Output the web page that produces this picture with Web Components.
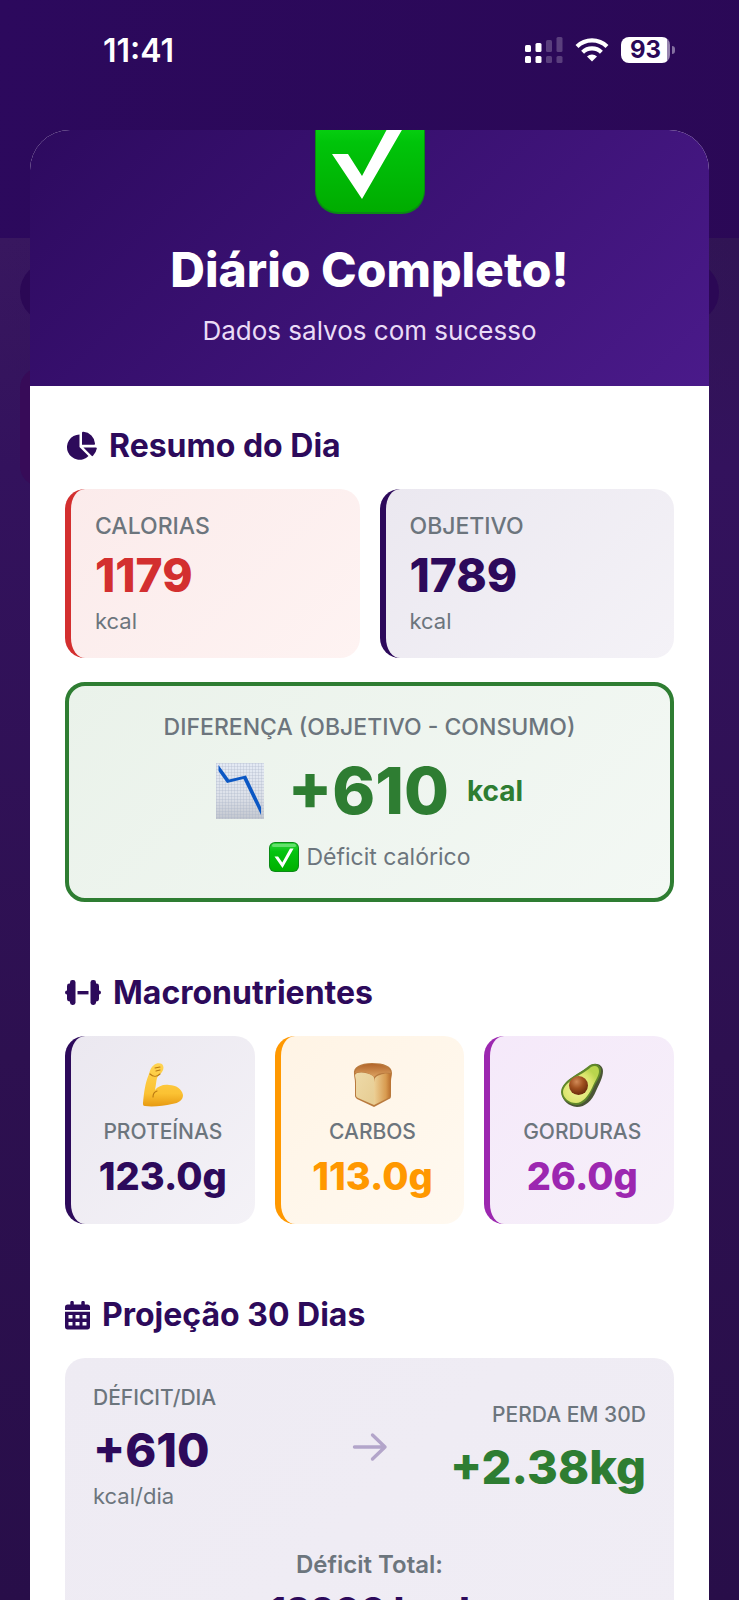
<!DOCTYPE html>
<html lang="pt-BR">
<head>
<meta charset="utf-8">
<meta name="viewport" content="width=device-width, initial-scale=1">
<title>Diário Completo</title>
<style>
    :root {
        --primary: #2d0a5b;
        --muted: #6c757d;
        --green: #2e7d32;
    }
    body {
        margin: 0;
        font-family: Inter, "Liberation Sans", sans-serif;
        color: var(--primary);
    }
</style>
</head>
<body>
<diary-app>
    <status-bar slot="status" time="11:41" battery="93"></status-bar>
    <summary-sheet>
        <success-header slot="header">
            Diário Completo!
            <span slot="subtitle">Dados salvos com sucesso</span>
        </success-header>

        <summary-section icon="pie" heading="Resumo do Dia">
            <card-row>
                <stat-card tone="red" label="CALORIAS" value="1179" unit="kcal"></stat-card>
                <stat-card tone="primary" label="OBJETIVO" value="1789" unit="kcal"></stat-card>
            </card-row>
            <difference-card label="DIFERENÇA (OBJETIVO - CONSUMO)" value="+610" unit="kcal">Déficit calórico</difference-card>
        </summary-section>

        <summary-section icon="dumbbell" heading="Macronutrientes">
            <card-row>
                <macro-card tone="primary" icon="arm" label="PROTEÍNAS" value="123.0g"></macro-card>
                <macro-card tone="orange" icon="bread" label="CARBOS" value="113.0g"></macro-card>
                <macro-card tone="purple" icon="avocado" label="GORDURAS" value="26.0g"></macro-card>
            </card-row>
        </summary-section>

        <summary-section icon="calendar" heading="Projeção 30 Dias">
            <projection-card></projection-card>
        </summary-section>
    </summary-sheet>
</diary-app>

<script>
const ICONS = {
    pie: `<svg width="32" height="30" viewBox="0 0 32 30" fill="#2d0a5b">
        <path d="M14.500 3.500V16l9 9A12.600 12.600 0 1 1 14.500 3.500z"/>
        <path d="M17 2a1.200 1.200 0 0 1 1.400-1.200A12.600 12.600 0 0 1 30 12.600a1 1 0 0 1-1 1.200H17z"/>
        <path d="M18.400 16.400h12.400a1 1 0 0 1 1 1.200 13 13 0 0 1-3.800 7.200 1 1 0 0 1-1.400 0z"/></svg>`,
    dumbbell: `<svg width="36" height="26" viewBox="0 0 36 26" fill="#2d0a5b">
        <rect x="5" y="0" width="5.500" height="25" rx="2.400"/><rect x="2" y="3.500" width="6" height="18" rx="2.400"/><rect x="0" y="10.500" width="6" height="4" rx="2"/>
        <rect x="25.500" y="0" width="5.500" height="25" rx="2.400"/><rect x="28" y="3.500" width="6" height="18" rx="2.400"/><rect x="30" y="10.500" width="6" height="4" rx="2"/>
        <rect x="12.500" y="11" width="11" height="3.400"/></svg>`,
    calendar: `<svg width="25" height="29" viewBox="0 0 25 29" fill="#2d0a5b">
        <path d="M5.300 1.600a1.700 1.700 0 0 1 3.500 0v2h7.500v-2a1.700 1.700 0 0 1 3.500 0v2h2.500A2.700 2.700 0 0 1 25 6.300V9H0V6.300a2.700 2.700 0 0 1 2.700-2.700h2.600z"/>
        <path fill-rule="evenodd" d="M0 10.800h25v15A2.700 2.700 0 0 1 22.300 28.500H2.700A2.700 2.700 0 0 1 0 25.800zM3.500 14v3.500h4V14zm7 0v3.500h4V14zm7 0v3.500h4V14zM3.500 21v3.500h4V21zm7 0v3.500h4V21zm7 0v3.500h4V21z"/></svg>`,
    arrow: `<svg width="36" height="30" viewBox="0 0 36 30" fill="none" stroke="#b3a5ca" stroke-width="3.400" stroke-linecap="round" stroke-linejoin="round">
        <path d="M2.500 15H33M20.500 3l12.500 12-12.500 12"/></svg>`,
    badge: `<svg width="110" height="110" viewBox="0 0 110 110">
        <defs><linearGradient id="g" x1="0" y1="0" x2="0" y2="1"><stop offset="0" stop-color="#12e01c"/><stop offset=".35" stop-color="#00c40a"/><stop offset="1" stop-color="#00ac00"/></linearGradient></defs>
        <rect width="110" height="110" rx="23" fill="#0a8a14"/><rect x="1" y="1" width="108" height="107" rx="22" fill="url(#g)"/>
        <path d="M17 50h16l14 22L79 12h16L47 95z" fill="#fff"/></svg>`,
    check: `<svg width="30" height="30" viewBox="0 0 30 30">
        <defs><linearGradient id="c" x1="0" y1="0" x2="0" y2="1"><stop offset="0" stop-color="#2fd43c"/><stop offset=".3" stop-color="#05c410"/><stop offset="1" stop-color="#00b000"/></linearGradient></defs>
        <rect width="30" height="30" rx="6" fill="#0b8a16"/><rect x="1" y="1" width="28" height="28" rx="5" fill="url(#c)"/>
        <rect x="3" y="2" width="24" height="3" rx="1.500" fill="#7fe886" opacity=".7"/>
        <path d="M5.500 14.500h3.600l4.200 6L21 6.500h3.600L13.500 26z" fill="#fff"/></svg>`,
    chart: `<svg width="48" height="56" viewBox="0 0 48 56">
        <defs><linearGradient id="p" x1="0" y1="0" x2="0" y2="1"><stop offset="0" stop-color="#e4eaf4"/><stop offset=".6" stop-color="#dde1e9"/><stop offset="1" stop-color="#c3c7cf"/></linearGradient>
        <pattern id="n" width="3" height="3" patternUnits="userSpaceOnUse"><path d="M0 .5h3M.5 0v3" stroke="#a5b1c4" stroke-width=".3"/></pattern></defs>
        <rect width="48" height="56" fill="url(#p)"/><rect width="48" height="56" fill="url(#n)"/>
        <path d="M2.500 2v6L11 20l16.500-4L45 52v-8L30 12.500 13 16.500z" fill="#0b57c4"/></svg>`,
    arm: `<svg width="44" height="44" viewBox="0 0 44 44">
        <defs><linearGradient id="a" x1="0" y1="0" x2="0" y2="1"><stop offset="0" stop-color="#ffd452"/><stop offset=".7" stop-color="#fbc233"/><stop offset="1" stop-color="#e79a12"/></linearGradient></defs>
        <path d="M13 2c2-2 6-2 8-1 2 2 2 5 0 8-1 2-4 3-5 6-1 4-1 7-2 12 3-4 9-6 14-5 7 0 13 4 14 10 0 5-4 8-11 9-8 2-20 3-27 2-2 0-2-1-2-3C3 30 4 20 8 11c1-4 2-7 5-9z" fill="url(#a)"/>
        <path d="M9 11c3 3 7 3 10 0M14 5l5-1M15 8l4-1M16 28c-3 1-4 3-4 6" fill="none" stroke="#b97812" stroke-width="1.100" stroke-linecap="round"/></svg>`,
    bread: `<svg width="40" height="44" viewBox="0 0 40 44">
        <defs><linearGradient id="f" x1="0" y1="0" x2="1" y2="1"><stop offset="0" stop-color="#eedaa8"/><stop offset="1" stop-color="#e6cc92"/></linearGradient>
        <linearGradient id="s" x1="0" y1="0" x2="1" y2="0"><stop offset="0" stop-color="#ecd096"/><stop offset=".7" stop-color="#d89b50"/><stop offset="1" stop-color="#b96d2b"/></linearGradient>
        <linearGradient id="t" x1="0" y1="0" x2="0" y2="1"><stop offset="0" stop-color="#b3662b"/><stop offset="1" stop-color="#dca261"/></linearGradient></defs>
        <path d="M1 11C0 4 7 0 19 0s20 3 20 10c0 3-1 5-1 8v15c0 2-1 3-2 3l-15 8L4 36c-1-1-2-2-2-3V20c0-4-1-6-1-9z" fill="#b97a3e"/>
        <path d="M2 12c1-4 13-3 18 1 2 2 1 5 1 8v21L5 35c-1-1-2-1-2-3V19c0-3-1-5-1-7z" fill="url(#f)"/>
        <path d="M21 42V21c0-5 1-8 6-9 5-2 9-2 11 0l-1 20c0 2 0 2-2 3z" fill="url(#s)"/>
        <path d="M2 10C4 3 11 1 19 1s17 2 19 9c-8-1-14 0-17 4C16 9 8 8 2 10z" fill="url(#t)"/></svg>`,
    avocado: `<svg width="44" height="44" viewBox="0 0 44 44">
        <defs><radialGradient id="v" cx=".4" cy=".6" r=".6"><stop offset="0" stop-color="#f4f3a0"/><stop offset=".7" stop-color="#dbe56c"/><stop offset="1" stop-color="#b9d54d"/></radialGradient>
        <radialGradient id="b" cx=".4" cy=".3" r=".7"><stop offset="0" stop-color="#d28b58"/><stop offset=".5" stop-color="#a0501f"/><stop offset="1" stop-color="#6b2c0c"/></radialGradient></defs>
        <path d="M31 2c5-3 12 0 12 6 0 7-4 13-7 20-4 10-11 16-19 16-9-1-16-7-15-16C3 17 18 12 31 2z" fill="#4a5536"/>
        <path d="M30 2c4-2 11-1 11 5 0 7-5 12-8 19-4 9-9 16-17 16C8 41 1 36 1 29 2 17 18 12 30 2z" fill="#60882b"/>
        <path d="M31 4c4-2 8-1 8 4 0 5-4 10-7 17-4 8-9 15-16 15S3 35 3 29C4 18 21 13 31 4z" fill="url(#v)"/>
        <circle cx="18.500" cy="22.500" r="9.500" fill="url(#b)"/></svg>`,
    signal: `<svg width="38" height="26" viewBox="0 0 38 26" fill="#fff">
        <rect y="8" width="6" height="7" rx="1.500"/><rect y="19" width="6" height="7" rx="1.500"/>
        <rect x="10.500" y="6" width="6" height="9" rx="1.500"/><rect x="10.500" y="19" width="6" height="7" rx="1.500"/>
        <g opacity=".22"><rect x="21" y="3" width="6" height="12" rx="1.500"/><rect x="21" y="19" width="6" height="7" rx="1.500"/>
        <rect x="31.500" y="0" width="6" height="15" rx="1.500"/><rect x="31.500" y="19" width="6" height="7" rx="1.500"/></g></svg>`,
    wifi: `<svg width="34" height="24" viewBox="0 0 34 24" fill="none" stroke="#fff" stroke-width="4.200">
        <path d="M2 8.500a21.500 21.500 0 0 1 30 0"/><path d="M7.600 14.200a13.500 13.500 0 0 1 18.800 0"/>
        <path d="M17 23.500l-5-5a7.200 7.200 0 0 1 10 0z" fill="#fff" stroke="none"/></svg>`
};

// card colours per tone: text/border, gradient start, gradient end
const TONES = {
    red: ['#d32f2f', '#fbebeb', '#fef3f2'],
    primary: ['#2d0a5b', '#ebe8f0', '#f4f2f7'],
    orange: ['#ff9800', '#fff4e5', '#fff9f0'],
    purple: ['#9c27b0', '#f5e9fa', '#f6f0f9']
};

class BaseElement extends HTMLElement {
    constructor() {
        super();
        this.attachShadow({ mode: 'open' });
    }

    connectedCallback() {
        this.shadowRoot.innerHTML = this.render();
    }

    attr(name) {
        return this.getAttribute(name) || '';
    }
}

class DiaryApp extends BaseElement {
    render() {
        return `
            <style>
                :host {
                    display: flex;
                    flex-direction: column;
                    position: relative;
                    box-sizing: border-box;
                    height: 100vh;
                    overflow: hidden;
                    background: linear-gradient(100deg, #2c095d, #2a0854);
                }
                /* dimmed page under the sheet */
                .page {
                    position: absolute;
                    inset: 238px 0 0;
                    background: linear-gradient(180deg, rgba(44, 14, 92, 0) 0, #33125d 230px, #2d1050 60%, #280e49), linear-gradient(90deg, #38175f, #301454);
                }
                .pill {
                    position: absolute;
                    top: 24px;
                    left: 20px;
                    right: 20px;
                    height: 60px;
                    border-radius: 30px;
                    background: #2b0855;
                }
                .panel {
                    position: absolute;
                    top: 130px;
                    left: 20px;
                    right: 30px;
                    height: 118px;
                    border-radius: 20px;
                    background: #370b58;
                }
                main {
                    position: relative;
                    flex: 1;
                    min-height: 0;
                    margin: 0 30px;
                }
            </style>
            <div class="page"><div class="pill"></div><div class="panel"></div></div>
            <slot name="status"></slot>
            <main><slot></slot></main>
        `;
    }
}

class StatusBar extends BaseElement {
    render() {
        return `
            <style>
                :host {
                    position: relative;
                    display: flex;
                    justify-content: space-between;
                    align-items: center;
                    box-sizing: border-box;
                    height: 130px;
                    padding: 0 64px 30px 103px;
                    color: #fff;
                }
                .time { font-size: 32px; font-weight: 600; }
                .icons { display: flex; align-items: center; gap: 12px; }
                .icons svg { display: block; }
                .battery { display: flex; align-items: center; gap: 2px; }
                .level {
                    width: 49px;
                    border-radius: 8px;
                    background: linear-gradient(90deg, #fff 46px, #9684ae 46px);
                    color: #2a0858;
                    font-size: 24px;
                    font-weight: 700;
                    line-height: 26px;
                    text-align: center;
                }
                .tip { width: 3px; height: 8px; border-radius: 0 3px 3px 0; background: #8470a0; }
            </style>
            <span class="time">${this.attr('time')}</span>
            <div class="icons">
                ${ICONS.signal}
                ${ICONS.wifi}
                <div class="battery"><span class="level">${this.attr('battery')}</span><span class="tip"></span></div>
            </div>
        `;
    }
}

class SummarySheet extends BaseElement {
    render() {
        return `
            <style>
                :host {
                    display: block;
                    height: 100%;
                    overflow: hidden;
                    border-radius: 40px 40px 0 0;
                    background: #fff;
                }
                .body {
                    display: flex;
                    flex-direction: column;
                    gap: 67px;
                    padding: 36px 35px;
                }
            </style>
            <slot name="header"></slot>
            <div class="body"><slot></slot></div>
        `;
    }
}

class SuccessHeader extends BaseElement {
    render() {
        return `
            <style>
                :host {
                    display: flex;
                    flex-direction: column;
                    align-items: center;
                    padding-bottom: 36px;
                    background: linear-gradient(135deg, #2d0a5f, #4a1a8a);
                    color: #fff;
                    text-align: center;
                }
                .badge {
                    display: flex;
                    align-items: flex-end;
                    height: 84px;
                    overflow: hidden;
                }
                .badge svg { flex: none; }
                h1 { margin: 26px 0 12px; font-size: 48px; font-weight: 800; line-height: 60px; }
                p { margin: 0; color: #eadcf6; font-size: 26px; line-height: 38px; }
            </style>
            <div class="badge">${ICONS.badge}</div>
            <h1><slot></slot></h1>
            <p><slot name="subtitle"></slot></p>
        `;
    }
}

class SummarySection extends BaseElement {
    render() {
        return `
            <style>
                :host { display: block; }
                h2 {
                    display: flex;
                    align-items: center;
                    gap: 12px;
                    margin: 0 0 19px;
                    font-size: 32px;
                    font-weight: 700;
                    line-height: 48px;
                }
                .content { display: flex; flex-direction: column; gap: 24px; }
            </style>
            <h2>${ICONS[this.attr('icon')]}${this.attr('heading')}</h2>
            <div class="content"><slot></slot></div>
        `;
    }
}

class CardRow extends BaseElement {
    render() {
        return `
            <style>
                :host { display: flex; gap: 20px; }
                ::slotted(*) { flex: 1 1 0; min-width: 0; }
            </style>
            <slot></slot>
        `;
    }
}

class StatCard extends BaseElement {
    render() {
        const [color, from, to] = TONES[this.attr('tone')];
        return `
            <style>
                :host {
                    display: block;
                    box-sizing: border-box;
                    padding: 22px 24px 23px;
                    border-left: 6px solid ${color};
                    border-radius: 20px;
                    background: linear-gradient(135deg, ${from}, ${to});
                }
                div { color: var(--muted); font-size: 22px; }
                .label { font-size: 23px; font-weight: 500; line-height: 30px; }
                .value { margin: 8px 0 6px; color: ${color}; font-size: 46px; font-weight: 800; line-height: 52px; }
                .unit { line-height: 28px; }
            </style>
            <div class="label">${this.attr('label')}</div>
            <div class="value">${this.attr('value')}</div>
            <div class="unit">${this.attr('unit')}</div>
        `;
    }
}

class DifferenceCard extends BaseElement {
    render() {
        return `
            <style>
                :host {
                    display: flex;
                    flex-direction: column;
                    align-items: center;
                    gap: 10px;
                    padding: 26px 24px 24px;
                    border: 4px solid var(--green);
                    border-radius: 20px;
                    background: linear-gradient(135deg, #eaf2ea, #f3f8f4);
                    color: var(--muted);
                }
                .label { font-size: 23px; font-weight: 500; line-height: 30px; }
                .amount { display: flex; align-items: center; color: var(--green); line-height: 78px; }
                .value { margin: 0 18px 0 24px; font-size: 65px; font-weight: 800; }
                .unit { font-size: 28px; font-weight: 700; }
                .status { display: flex; align-items: center; gap: 8px; font-size: 23px; line-height: 34px; }
            </style>
            <div class="label">${this.attr('label')}</div>
            <div class="amount">
                ${ICONS.chart}
                <span class="value">${this.attr('value')}</span>
                <span class="unit">${this.attr('unit')}</span>
            </div>
            <div class="status">${ICONS.check}<span><slot></slot></span></div>
        `;
    }
}

class MacroCard extends BaseElement {
    render() {
        const [color, from, to] = TONES[this.attr('tone')];
        return `
            <style>
                :host {
                    display: flex;
                    flex-direction: column;
                    align-items: center;
                    box-sizing: border-box;
                    padding: 27px 10px 24px;
                    border-left: 6px solid ${color};
                    border-radius: 20px;
                    background: linear-gradient(135deg, ${from}, ${to});
                }
                .label { margin: 11px 0 6px; color: var(--muted); font-size: 21px; font-weight: 500; line-height: 28px; }
                .value { color: ${color}; font-size: 38px; font-weight: 800; line-height: 48px; }
            </style>
            ${ICONS[this.attr('icon')]}
            <div class="label">${this.attr('label')}</div>
            <div class="value">${this.attr('value')}</div>
        `;
    }
}

class ProjectionCard extends BaseElement {
    render() {
        return `
            <style>
                :host {
                    display: block;
                    padding: 26px 28px;
                    border-radius: 20px;
                    background: linear-gradient(135deg, #eeebf3, #f0edf5);
                    color: var(--muted);
                }
                .row { display: flex; align-items: center; }
                .row > div { flex: 1 1 0; }
                .label { font-size: 21px; font-weight: 500; line-height: 28px; }
                .value { margin-top: 11px; color: var(--primary); font-size: 47px; font-weight: 800; line-height: 54px; }
                .unit { margin-top: 5px; font-size: 22px; line-height: 28px; }
                .loss { text-align: right; }
                .loss .value { color: var(--green); }
                .total { margin-top: 39px; text-align: center; font-size: 24px; font-weight: 600; line-height: 32px; }
                .total strong { display: block; margin-top: 6px; color: var(--primary); font-size: 37px; font-weight: 800; line-height: 48px; }
            </style>
            <div class="row">
                <div>
                    <div class="label">DÉFICIT/DIA</div>
                    <div class="value">+610</div>
                    <div class="unit">kcal/dia</div>
                </div>
                ${ICONS.arrow}
                <div class="loss">
                    <div class="label">PERDA EM 30D</div>
                    <div class="value">+2.38kg</div>
                </div>
            </div>
            <div class="total">Déficit Total: <strong>18300 kcal</strong></div>
        `;
    }
}

customElements.define('diary-app', DiaryApp);
customElements.define('status-bar', StatusBar);
customElements.define('summary-sheet', SummarySheet);
customElements.define('success-header', SuccessHeader);
customElements.define('summary-section', SummarySection);
customElements.define('card-row', CardRow);
customElements.define('stat-card', StatCard);
customElements.define('difference-card', DifferenceCard);
customElements.define('macro-card', MacroCard);
customElements.define('projection-card', ProjectionCard);
</script>
</body>
</html>
